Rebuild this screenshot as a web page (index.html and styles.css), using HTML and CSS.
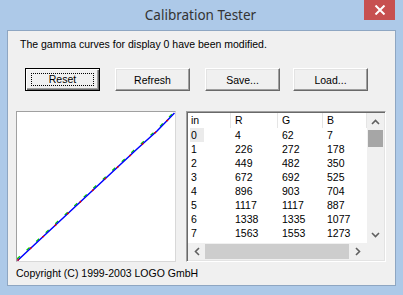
FILE: index.html
```html
<!DOCTYPE html>
<html>
<head>
<meta charset="utf-8">
<link rel="stylesheet" href="styles.css">
</head>
<body>
<div class="window">
  <div class="titlebar">
    <span class="title">Calibration Tester</span>
    <div class="close">
      <svg width="12" height="10" viewBox="0 0 12 10"><path d="M1.5 0.5 L10.5 9.5 M10.5 0.5 L1.5 9.5" stroke="#fff" stroke-width="2"/></svg>
    </div>
  </div>
  <div class="client">
    <div class="msg">The gamma curves for display 0 have been modified.</div>
    <div class="buttons">
      <div class="btn default"><span class="focus">Reset</span></div>
      <div class="btn">Refresh</div>
      <div class="btn">Save...</div>
      <div class="btn">Load...</div>
    </div>
    <div class="panels">
      <div class="graph">
        <svg width="158" height="149" viewBox="0 0 158 149">
          <polyline fill="none" stroke="#00d000" stroke-width="1.3" stroke-dasharray="4 9" points="0,147 30,119.5 60,91.5 90,63.5 120,35.5 140,17.5 157,0"/>
          <polyline fill="none" stroke="#0000ff" stroke-width="1.5" points="0.5,148.5 30,121 60,93 90,65 120,37 140,19 157.5,1"/>
          <polyline fill="none" stroke="#e00000" stroke-width="1.5" stroke-dasharray="2 15" points="0.5,148.5 30,121 60,93 90,65 120,37 140,19 157.5,1"/>
        </svg>
      </div>
      <div class="list">
        <div class="content">
          <div class="row head">
            <div class="c c1">in</div><div class="c c2">R</div><div class="c c3">G</div><div class="c c4">B</div>
          </div>
          <div class="rows">
            <div class="row"><div class="c c1"><span class="focusitem">0</span></div><div class="c c2">4</div><div class="c c3">62</div><div class="c c4">7</div></div>
            <div class="row"><div class="c c1">1</div><div class="c c2">226</div><div class="c c3">272</div><div class="c c4">178</div></div>
            <div class="row"><div class="c c1">2</div><div class="c c2">449</div><div class="c c3">482</div><div class="c c4">350</div></div>
            <div class="row"><div class="c c1">3</div><div class="c c2">672</div><div class="c c3">692</div><div class="c c4">525</div></div>
            <div class="row"><div class="c c1">4</div><div class="c c2">896</div><div class="c c3">903</div><div class="c c4">704</div></div>
            <div class="row"><div class="c c1">5</div><div class="c c2">1117</div><div class="c c3">1117</div><div class="c c4">887</div></div>
            <div class="row"><div class="c c1">6</div><div class="c c2">1338</div><div class="c c3">1335</div><div class="c c4">1077</div></div>
            <div class="row"><div class="c c1">7</div><div class="c c2">1563</div><div class="c c3">1553</div><div class="c c4">1273</div></div>
          </div>
        </div>
        <div class="vscroll">
          <div class="arrow"><svg width="9" height="6" viewBox="0 0 9 6"><path d="M1 5 L4.5 1.5 L8 5" fill="none" stroke="#606060" stroke-width="1.6"/></svg></div>
          <div class="vthumb"></div>
          <div class="vtrack"></div>
          <div class="arrow"><svg width="9" height="6" viewBox="0 0 9 6"><path d="M1 1 L4.5 4.5 L8 1" fill="none" stroke="#606060" stroke-width="1.6"/></svg></div>
        </div>
        <div class="hscroll">
          <div class="harrow"><svg width="6" height="9" viewBox="0 0 6 9"><path d="M5 1 L1.5 4.5 L5 8" fill="none" stroke="#606060" stroke-width="1.6"/></svg></div>
          <div class="hthumb"></div>
          <div class="harrow"><svg width="6" height="9" viewBox="0 0 6 9"><path d="M1 1 L4.5 4.5 L1 8" fill="none" stroke="#606060" stroke-width="1.6"/></svg></div>
        </div>
        <div class="corner"></div>
      </div>
    </div>
    <div class="copyright">Copyright (C) 1999-2003 LOGO GmbH</div>
  </div>
</div>
</body>
</html>
```
FILE: styles.css
```css
* { box-sizing: border-box; }
html, body { margin: 0; padding: 0; }
body {
  width: 403px;
  height: 295px;
  overflow: hidden;
  font-family: "Liberation Sans", Arial, sans-serif;
  font-size: 10.5px;
  color: #000;
}
.window {
  width: 403px;
  height: 295px;
  background: #adc9e8;
  display: flex;
  flex-direction: column;
}
.titlebar {
  position: relative;
  height: 30px;
  flex: none;
  display: flex;
  align-items: center;
  justify-content: center;
}
.title {
  font-family: "Noto Sans", "Open Sans", sans-serif;
  font-size: 13.5px;
  color: #333;
  margin-left: -2px;
}
.close {
  position: absolute;
  right: 8px;
  top: 0;
  width: 31px;
  height: 20px;
  background: #c75050;
  display: flex;
  align-items: center;
  justify-content: center;
}
.client {
  margin: 0 7px 9px 7px;
  flex: 1;
  border: 1px solid #8ea6c2;
  background: #f0f0f0;
  display: flex;
  flex-direction: column;
  padding: 7px 0 0 0;
}
.msg {
  padding-left: 12px;
  line-height: 13px;
  height: 13px;
}
.buttons {
  display: flex;
  margin-top: 17px;
  padding-left: 17px;
  gap: 15px;
}
.btn {
  width: 75px;
  height: 23px;
  background: #f0f0f0;
  border: 1px solid;
  border-color: #fff #696969 #696969 #fff;
  box-shadow: inset -1px -1px 0 #a0a0a0, inset 1px 1px 0 #e3e3e3;
  display: flex;
  align-items: center;
  justify-content: center;
}
.btn:nth-child(4) { margin-left: -2px; }
.btn.default {
  border-color: #000;
  box-shadow: inset 1px 1px 0 #fff, inset -1px -1px 0 #696969, inset -2px -2px 0 #a0a0a0;
}
.focus {
  width: 63px;
  height: 13px;
  border: 1px dotted #000;
  display: flex;
  align-items: center;
  justify-content: center;
  margin-top: -1px;
}
.panels {
  display: flex;
  margin-top: 20px;
  padding-left: 8px;
  gap: 10px;
}
.graph {
  width: 160px;
  height: 151px;
  border: 1px solid #a0a0a0;
  border-right-color: #d8d8d8;
  border-bottom-color: #d8d8d8;
  background: #fff;
}
.graph svg { display: block; }
.list {
  width: 200px;
  height: 151px;
  border: 1px solid;
  border-color: #a0a0a0 #fff #fff #a0a0a0;
  box-shadow: inset 1px 1px 0 #696969, inset -1px -1px 0 #e3e3e3;
  padding: 1px;
  display: grid;
  grid-template-columns: 1fr 17px;
  grid-template-rows: 1fr 17px;
  background: #fff;
}
.content {
  overflow: hidden;
  background: #fff;
}
.row {
  display: flex;
  height: 14px;
  line-height: 14px;
}
.row.head {
  height: 15px;
  line-height: 15px;
}
.row.head .c { border-right: 1px solid #e5e5e5; }
.c { padding-left: 4px; flex: none; white-space: nowrap; }
.c1 { width: 43px; padding-left: 3px; }
.c2 { width: 47px; }
.c3 { width: 45px; }
.c4 { width: 44px; }
.focusitem {
  display: inline-block;
  background: #ebebeb;
  padding: 0 7px 0 1px;
  margin-left: -1px;
}
.vscroll {
  background: #f0f0f0;
  display: flex;
  flex-direction: column;
}
.arrow {
  height: 17px;
  display: flex;
  align-items: center;
  justify-content: center;
}
.arrow svg, .harrow svg { display: block; }
.vthumb {
  height: 17px;
  margin: 0 1px;
  background: #a6a6a6;
}
.vtrack { flex: 1; }
.hscroll {
  background: #f0f0f0;
  display: flex;
  align-items: stretch;
}
.harrow {
  width: 17px;
  display: flex;
  align-items: center;
  justify-content: center;
}
.hthumb {
  width: 144px;
  margin: 1px 0;
  background: #cdcdcd;
}
.corner { background: #f0f0f0; }
.copyright {
  padding-left: 8px;
  margin-top: 5px;
  line-height: 13px;
}
```
